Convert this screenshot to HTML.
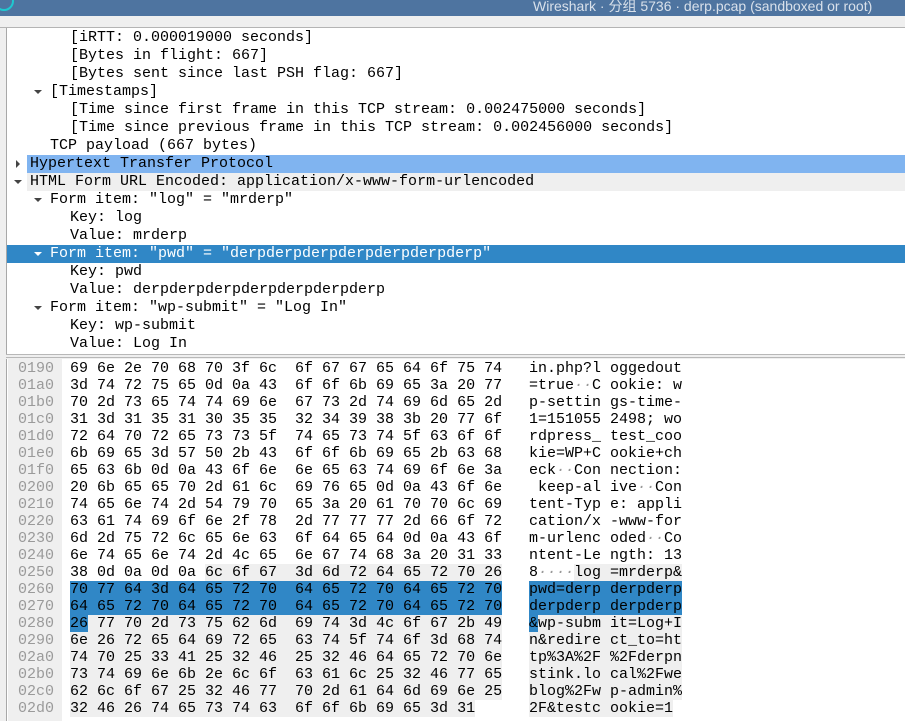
<!DOCTYPE html>
<html><head><meta charset="utf-8"><style>
html,body{margin:0;padding:0;width:905px;height:721px;overflow:hidden;background:#efefef;font-family:"Liberation Mono",monospace;}
#title{position:absolute;left:0;top:0;width:905px;height:16px;background:#4e74a0;}
#title .t{position:absolute;left:533px;top:-4px;font:14px "Liberation Sans","Noto Sans CJK SC",sans-serif;color:#d8e0ea;white-space:nowrap}
#title .c{position:absolute;left:-6px;top:-9px;width:16px;height:16px;border:2px solid #1fc8d0;border-radius:50%}
#sep{position:absolute;left:0;top:27px;width:905px;height:1px;background:#b4b4b4}
#tree{position:absolute;left:6px;top:28px;width:899px;height:326px;background:#fff;border-left:1px solid #a8a8a8;overflow:hidden}
.r{position:absolute;left:0;width:899px;height:18px;font-size:15px;line-height:18px;color:#000;white-space:pre}
.r span{position:absolute;top:0}
.ar{position:absolute;width:0;height:0}
.dn{border-left:4px solid transparent;border-right:4px solid transparent;border-top:4px solid #444;top:7px}
.rt{border-top:4px solid transparent;border-bottom:4px solid transparent;border-left:4px solid #444;top:5px}
#split{position:absolute;left:6px;top:354px;width:899px;height:4px;background:#efefef;border-top:1px solid #b8b8b8;border-bottom:1px solid #b8b8b8;box-sizing:border-box}
#hex{position:absolute;left:6px;top:359px;width:899px;height:362px;background:#fff;border-left:1px solid #a8a8a8;overflow:hidden}
#offcol{position:absolute;left:1px;top:0;width:54px;height:362px;background:#efefef}
.h{position:absolute;left:0;height:17px;font-size:15px;line-height:17px;white-space:pre;color:#000}
.h .o{position:absolute;left:11px;color:#9a9a9a}
.h .x{position:absolute;left:63px}
.h .a{position:absolute;left:522px}
.g{background:#efefef}
.b{background:#3087c6}
.d{color:#999}
</style></head><body>
<div id="title"><div class="c"></div><div class="t">Wireshark · 分组 5736 · derp.pcap (sandboxed or root)</div></div>
<div id="sep"></div>
<div id="tree">
<div class="r" style="top:1px"><span style="left:63px">[iRTT: 0.000019000 seconds]</span></div>
<div class="r" style="top:19px"><span style="left:63px">[Bytes in flight: 667]</span></div>
<div class="r" style="top:37px"><span style="left:63px">[Bytes sent since last PSH flag: 667]</span></div>
<div class="r" style="top:55px"><i class="ar dn" style="left:27px"></i><span style="left:43px">[Timestamps]</span></div>
<div class="r" style="top:73px"><span style="left:63px">[Time since first frame in this TCP stream: 0.002475000 seconds]</span></div>
<div class="r" style="top:91px"><span style="left:63px">[Time since previous frame in this TCP stream: 0.002456000 seconds]</span></div>
<div class="r" style="top:109px"><span style="left:43px">TCP payload (667 bytes)</span></div>
<div class="r" style="top:127px"><i class="ar rt" style="left:9px"></i><div style="position:absolute;left:20px;top:0;width:879px;height:18px;background:#80b4f0"></div><span style="left:23px">Hypertext Transfer Protocol</span></div>
<div class="r" style="top:145px"><i class="ar dn" style="left:7px"></i><div style="position:absolute;left:20px;top:0;width:879px;height:18px;background:#efefef"></div><span style="left:23px">HTML Form URL Encoded: application/x-www-form-urlencoded</span></div>
<div class="r" style="top:163px"><i class="ar dn" style="left:27px"></i><span style="left:43px">Form item: "log" = "mrderp"</span></div>
<div class="r" style="top:181px"><span style="left:63px">Key: log</span></div>
<div class="r" style="top:199px"><span style="left:63px">Value: mrderp</span></div>
<div class="r" style="top:217px;background:#3087c6;color:#fff"><i class="ar dn" style="left:27px;border-top-color:#fff"></i><span style="left:43px">Form item: "pwd" = "derpderpderpderpderpderpderp"</span></div>
<div class="r" style="top:235px"><span style="left:63px">Key: pwd</span></div>
<div class="r" style="top:253px"><span style="left:63px">Value: derpderpderpderpderpderpderp</span></div>
<div class="r" style="top:271px"><i class="ar dn" style="left:27px"></i><span style="left:43px">Form item: "wp-submit" = "Log In"</span></div>
<div class="r" style="top:289px"><span style="left:63px">Key: wp-submit</span></div>
<div class="r" style="top:307px"><span style="left:63px">Value: Log In</span></div>
</div>
<div id="split"></div>
<div id="hex"><div id="offcol"></div>
<div class="h" style="top:1px"><span class="o">0190</span><span class="x">69 6e 2e 70 68 70 3f 6c  6f 67 67 65 64 6f 75 74</span><span class="a">in.php?l oggedout</span></div>
<div class="h" style="top:18px"><span class="o">01a0</span><span class="x">3d 74 72 75 65 0d 0a 43  6f 6f 6b 69 65 3a 20 77</span><span class="a">=true<i class="d">··</i>C ookie: w</span></div>
<div class="h" style="top:35px"><span class="o">01b0</span><span class="x">70 2d 73 65 74 74 69 6e  67 73 2d 74 69 6d 65 2d</span><span class="a">p-settin gs-time-</span></div>
<div class="h" style="top:52px"><span class="o">01c0</span><span class="x">31 3d 31 35 31 30 35 35  32 34 39 38 3b 20 77 6f</span><span class="a">1=151055 2498; wo</span></div>
<div class="h" style="top:69px"><span class="o">01d0</span><span class="x">72 64 70 72 65 73 73 5f  74 65 73 74 5f 63 6f 6f</span><span class="a">rdpress_ test_coo</span></div>
<div class="h" style="top:86px"><span class="o">01e0</span><span class="x">6b 69 65 3d 57 50 2b 43  6f 6f 6b 69 65 2b 63 68</span><span class="a">kie=WP+C ookie+ch</span></div>
<div class="h" style="top:103px"><span class="o">01f0</span><span class="x">65 63 6b 0d 0a 43 6f 6e  6e 65 63 74 69 6f 6e 3a</span><span class="a">eck<i class="d">··</i>Con nection:</span></div>
<div class="h" style="top:120px"><span class="o">0200</span><span class="x">20 6b 65 65 70 2d 61 6c  69 76 65 0d 0a 43 6f 6e</span><span class="a"> keep-al ive<i class="d">··</i>Con</span></div>
<div class="h" style="top:137px"><span class="o">0210</span><span class="x">74 65 6e 74 2d 54 79 70  65 3a 20 61 70 70 6c 69</span><span class="a">tent-Typ e: appli</span></div>
<div class="h" style="top:154px"><span class="o">0220</span><span class="x">63 61 74 69 6f 6e 2f 78  2d 77 77 77 2d 66 6f 72</span><span class="a">cation/x -www-for</span></div>
<div class="h" style="top:171px"><span class="o">0230</span><span class="x">6d 2d 75 72 6c 65 6e 63  6f 64 65 64 0d 0a 43 6f</span><span class="a">m-urlenc oded<i class="d">··</i>Co</span></div>
<div class="h" style="top:188px"><span class="o">0240</span><span class="x">6e 74 65 6e 74 2d 4c 65  6e 67 74 68 3a 20 31 33</span><span class="a">ntent-Le ngth: 13</span></div>
<div class="h" style="top:205px"><span class="o">0250</span><span class="x">38 0d 0a 0d 0a <b class="g" style="font-weight:normal">6c 6f 67  3d 6d 72 64 65 72 70 26</b></span><span class="a">8<i class="d">····</i><b class="g" style="font-weight:normal">log =mrderp&amp;</b></span></div>
<div class="h" style="top:222px"><span class="o">0260</span><span class="x b">70 77 64 3d 64 65 72 70  64 65 72 70 64 65 72 70</span><span class="a b">pwd=derp derpderp</span></div>
<div class="h" style="top:239px"><span class="o">0270</span><span class="x b">64 65 72 70 64 65 72 70  64 65 72 70 64 65 72 70</span><span class="a b">derpderp derpderp</span></div>
<div class="h" style="top:256px"><span class="o">0280</span><span class="x"><b class="b" style="font-weight:normal">26</b><b class="g" style="font-weight:normal"> 77 70 2d 73 75 62 6d  69 74 3d 4c 6f 67 2b 49</b></span><span class="a"><b class="b" style="font-weight:normal">&amp;</b><b class="g" style="font-weight:normal">wp-subm it=Log+I</b></span></div>
<div class="h" style="top:273px"><span class="o">0290</span><span class="x g">6e 26 72 65 64 69 72 65  63 74 5f 74 6f 3d 68 74</span><span class="a g">n&amp;redire ct_to=ht</span></div>
<div class="h" style="top:290px"><span class="o">02a0</span><span class="x g">74 70 25 33 41 25 32 46  25 32 46 64 65 72 70 6e</span><span class="a g">tp%3A%2F %2Fderpn</span></div>
<div class="h" style="top:307px"><span class="o">02b0</span><span class="x g">73 74 69 6e 6b 2e 6c 6f  63 61 6c 25 32 46 77 65</span><span class="a g">stink.lo cal%2Fwe</span></div>
<div class="h" style="top:324px"><span class="o">02c0</span><span class="x g">62 6c 6f 67 25 32 46 77  70 2d 61 64 6d 69 6e 25</span><span class="a g">blog%2Fw p-admin%</span></div>
<div class="h" style="top:341px"><span class="o">02d0</span><span class="x g">32 46 26 74 65 73 74 63  6f 6f 6b 69 65 3d 31</span><span class="a g">2F&amp;testc ookie=1</span></div>
</div>
</body></html>
